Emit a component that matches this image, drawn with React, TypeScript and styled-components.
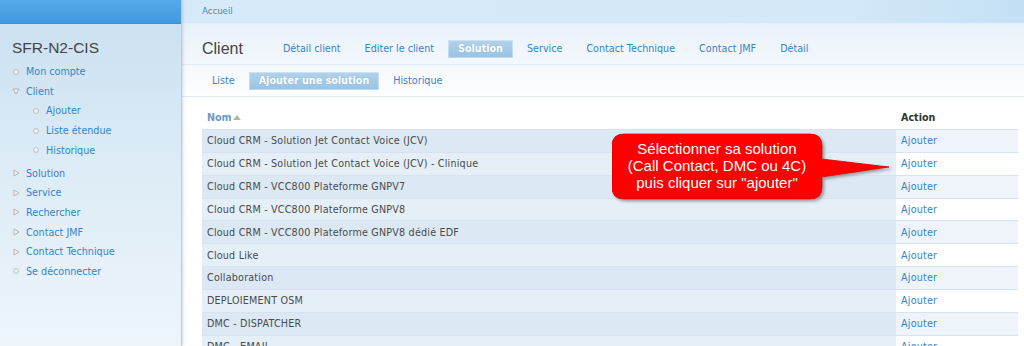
import { FC } from 'react';
import styled, { createGlobalStyle } from 'styled-components';

const GlobalStyle = createGlobalStyle`
  html, body {
    margin: 0;
    padding: 0;
    height: 346px;
    overflow: hidden;
    background: #ffffff;
  }

  body {
    font-family: 'DejaVu Sans', Verdana, sans-serif;
    font-size: 9.6px;
    color: #4b4b4b;
  }
`;

const Page = styled.div`
  display: flex;
  width: 1024px;
  height: 346px;
  overflow: hidden;
`;

/* ---------- sidebar ---------- */

const Sidebar = styled.aside`
  flex: none;
  width: 181px;
  background: linear-gradient(#c9dff0 0%, #dcebf6 45%, #edf5fb 100%);
  border-right: 1px solid #b3cde1;
  box-shadow: 1px 0 3px rgba(120, 150, 180, 0.35);
  position: relative;
  z-index: 1;
`;

const SideTopBar = styled.div`
  height: 24px;
  background: linear-gradient(#55abe8, #4198de);
  border-bottom: 1px solid #3d90d4;
  box-sizing: border-box;
`;

const SiteName = styled.h1`
  margin: 0;
  padding: 14px 0 0 12px;
  font-family: 'Liberation Sans', Arial, sans-serif;
  font-weight: 400;
  font-size: 15.5px;
  line-height: 20px;
  color: #454545;
`;

const Menu = styled.ul<{ $nested?: boolean }>`
  list-style: none;
  margin: ${(p) => (p.$nested ? '0 0 3.5px 0' : '4px 0 0 0')};
  padding: ${(p) => (p.$nested ? '0 0 0 20px' : '0 0 0 11px')};
`;

const MenuItem = styled.li`
  display: block;
`;

const MenuRow = styled.div`
  display: flex;
  align-items: center;
  height: 19.6px;
`;

const BulletBox = styled.span`
  flex: none;
  width: 10px;
  height: 10px;
  margin-right: 5px;
  display: flex;
  align-items: center;
  justify-content: center;
`;

const MenuLink = styled.a`
  color: #3385cc;
  text-decoration: none;
  white-space: nowrap;
`;

type BulletKind = 'leaf' | 'open' | 'closed';

const Bullet: FC<{ kind: BulletKind }> = ({ kind }) => (
  <BulletBox>
    <svg width="10" height="10" viewBox="0 0 10 10">
      {kind === 'leaf' && (
        <circle cx="5" cy="5" r="2.4" fill="#f4f4f4" stroke="#bdbdbd" strokeWidth="1" />
      )}
      {kind === 'open' && (
        <polygon points="2,3 8,3 5,8" fill="#f2f2f2" stroke="#a9a9a9" strokeWidth="0.9" />
      )}
      {kind === 'closed' && (
        <polygon points="3,2 8,5 3,8" fill="#f2f2f2" stroke="#b0b0b0" strokeWidth="0.9" />
      )}
    </svg>
  </BulletBox>
);

interface NavEntry {
  label: string;
  kind: BulletKind;
  children?: string[];
}

const nav: NavEntry[] = [
  { label: 'Mon compte', kind: 'leaf' },
  { label: 'Client', kind: 'open', children: ['Ajouter', 'Liste étendue', 'Historique'] },
  { label: 'Solution', kind: 'closed' },
  { label: 'Service', kind: 'closed' },
  { label: 'Rechercher', kind: 'closed' },
  { label: 'Contact JMF', kind: 'closed' },
  { label: 'Contact Technique', kind: 'closed' },
  { label: 'Se déconnecter', kind: 'leaf' },
];

/* ---------- main ---------- */

const Main = styled.main`
  flex: 1;
  min-width: 0;
  position: relative;
  background: #ffffff;
`;

const Breadcrumb = styled.div`
  height: 24px;
  box-sizing: border-box;
  padding-left: 20px;
  font-size: 8.6px;
  line-height: 22px;
  background: linear-gradient(90deg, #d7eaf9 0%, #d3e8f8 80%, #c4e0f5 100%);
  border-bottom: 1px solid #e6eff7;

  a {
    color: #3a8ad0;
    text-decoration: none;
  }
`;

const HeaderRow = styled.div`
  display: flex;
  align-items: center;
  height: 41px;
  box-sizing: border-box;
  padding: 15px 0 6px 20px;
  background: linear-gradient(#e9f2fa, #f3f8fc);
  border-bottom: 1px solid #e2ebf3;
`;

const PageTitle = styled.h2`
  margin: 0 28px 0 0;
  font-family: 'Liberation Sans', Arial, sans-serif;
  font-weight: 400;
  font-size: 16px;
  line-height: 18px;
  color: #444444;
`;

const TabRow = styled.div`
  display: flex;
  align-items: center;
`;

const Tab = styled.a<{ $active?: boolean }>`
  display: block;
  height: 18px;
  line-height: 18px;
  padding: 0 10px;
  margin: 0 2px;
  white-space: nowrap;
  text-decoration: none;
  color: ${(p) => (p.$active ? '#ffffff' : '#3385cc')};
  font-weight: ${(p) => (p.$active ? 700 : 400)};
  background: ${(p) => (p.$active ? 'linear-gradient(#b3d3ea, #99c3e2)' : 'transparent')};
  box-shadow: ${(p) => (p.$active ? 'inset 0 0 0 1px rgba(255,255,255,0.35)' : 'none')};
  text-shadow: ${(p) => (p.$active ? '0 0 1px rgba(80,120,160,0.4)' : 'none')};
`;

const SubTabRow = styled.div`
  display: flex;
  align-items: center;
  height: 32px;
  box-sizing: border-box;
  padding: 7px 0 6px 18px;
  background: linear-gradient(#f6fafd, #fcfeff);
  border-bottom: 1px solid #dde8f2;
`;

const Content = styled.div`
  padding: 9px 6px 0 20px;
`;

const Table = styled.table`
  width: 100%;
  border-collapse: collapse;
  table-layout: fixed;
`;

const HeadCell = styled.th<{ $link?: boolean }>`
  height: 23px;
  padding: 0 5px;
  text-align: left;
  font-weight: 700;
  color: ${(p) => (p.$link ? '#6a9bc8' : '#333333')};
  border-bottom: 1px solid #d6e5f1;
`;

const SortArrow = styled.span`
  display: inline-block;
  margin-left: 1px;
  width: 0;
  height: 0;
  border-left: 4px solid transparent;
  border-right: 4px solid transparent;
  border-bottom: 5px solid #b4b4b4;
  vertical-align: 1px;
`;

const Row = styled.tr`
  height: 22.85px;
`;

const Cell = styled.td<{ $sorted?: boolean; $odd?: boolean }>`
  padding: 0 5px;
  white-space: nowrap;
  overflow: hidden;
  letter-spacing: 0.2px;
  border-bottom: 1px solid #d5e4f0;
  color: #4b4b4b;
  background: ${(p) =>
    p.$sorted ? (p.$odd ? '#dce9f4' : '#e5eff8') : p.$odd ? '#eef4fa' : '#ffffff'};

  a {
    color: #3385cc;
    text-decoration: none;
  }
`;

/* ---------- callout ---------- */

const Callout = styled.div`
  position: absolute;
  left: 430px;
  top: 133px;
  width: 290px;
  height: 74px;
`;

const CalloutShape = styled.svg`
  position: absolute;
  left: 0;
  top: 0;
`;

const CalloutText = styled.div`
  position: relative;
  width: 210px;
  padding-top: 7px;
  text-align: center;
  font-family: 'Liberation Sans', Arial, sans-serif;
  font-size: 15px;
  line-height: 17px;
  color: #ffffff;
`;

const solutions = [
  'Cloud CRM - Solution Jet Contact Voice (JCV)',
  'Cloud CRM - Solution Jet Contact Voice (JCV) - Clinique',
  'Cloud CRM - VCC800 Plateforme GNPV7',
  'Cloud CRM - VCC800 Plateforme GNPV8',
  'Cloud CRM - VCC800 Plateforme GNPV8 dédié EDF',
  'Cloud Like',
  'Collaboration',
  'DEPLOIEMENT OSM',
  'DMC - DISPATCHER',
  'DMC - EMAIL',
];

const tabs = ['Détail client', 'Editer le client', 'Solution', 'Service', 'Contact Technique', 'Contact JMF', 'Détail'];
const subTabs = ['Liste', 'Ajouter une solution', 'Historique'];

const App: FC = () => (
  <>
    <GlobalStyle />
    <Page>
      <Sidebar>
        <SideTopBar />
        <SiteName>SFR-N2-CIS</SiteName>
        <Menu>
          {nav.map((entry) => (
            <MenuItem key={entry.label}>
              <MenuRow>
                <Bullet kind={entry.kind} />
                <MenuLink href="#">{entry.label}</MenuLink>
              </MenuRow>
              {entry.children && (
                <Menu $nested>
                  {entry.children.map((child) => (
                    <MenuItem key={child}>
                      <MenuRow>
                        <Bullet kind="leaf" />
                        <MenuLink href="#">{child}</MenuLink>
                      </MenuRow>
                    </MenuItem>
                  ))}
                </Menu>
              )}
            </MenuItem>
          ))}
        </Menu>
      </Sidebar>

      <Main>
        <Breadcrumb>
          <a href="#">Accueil</a>
        </Breadcrumb>

        <HeaderRow>
          <PageTitle>Client</PageTitle>
          <TabRow>
            {tabs.map((t) => (
              <Tab key={t} href="#" $active={t === 'Solution'}>
                {t}
              </Tab>
            ))}
          </TabRow>
        </HeaderRow>

        <SubTabRow>
          {subTabs.map((t) => (
            <Tab key={t} href="#" $active={t === 'Ajouter une solution'}>
              {t}
            </Tab>
          ))}
        </SubTabRow>

        <Content>
          <Table>
            <colgroup>
              <col />
              <col style={{ width: 122 }} />
            </colgroup>
            <thead>
              <tr>
                <HeadCell $link>
                  Nom<SortArrow />
                </HeadCell>
                <HeadCell>Action</HeadCell>
              </tr>
            </thead>
            <tbody>
              {solutions.map((name, i) => (
                <Row key={name}>
                  <Cell $sorted $odd={i % 2 === 0}>
                    {name}
                  </Cell>
                  <Cell $odd={i % 2 === 0}>
                    <a href="#">Ajouter</a>
                  </Cell>
                </Row>
              ))}
            </tbody>
          </Table>
        </Content>

        <Callout>
          <CalloutShape width="290" height="74" viewBox="0 0 290 74">
            <defs>
              <filter id="callout-shadow" x="-10%" y="-20%" width="130%" height="150%">
                <feDropShadow dx="2" dy="2" stdDeviation="1.6" floodColor="#555" floodOpacity="0.55" />
              </filter>
            </defs>
            <path
              d="M12 1 H198 Q210 1 210 13 V26 L277 34 L210 44 V54 Q210 66 198 66 H12 Q0 66 0 54 V13 Q0 1 12 1 Z"
              fill="#ff0000"
              stroke="#d00000"
              strokeWidth="0.8"
              filter="url(#callout-shadow)"
            />
          </CalloutShape>
          <CalloutText>
            Sélectionner sa solution
            <br />
            (Call Contact, DMC ou 4C)
            <br />
            puis cliquer sur "ajouter"
          </CalloutText>
        </Callout>
      </Main>
    </Page>
  </>
);

export default App;
